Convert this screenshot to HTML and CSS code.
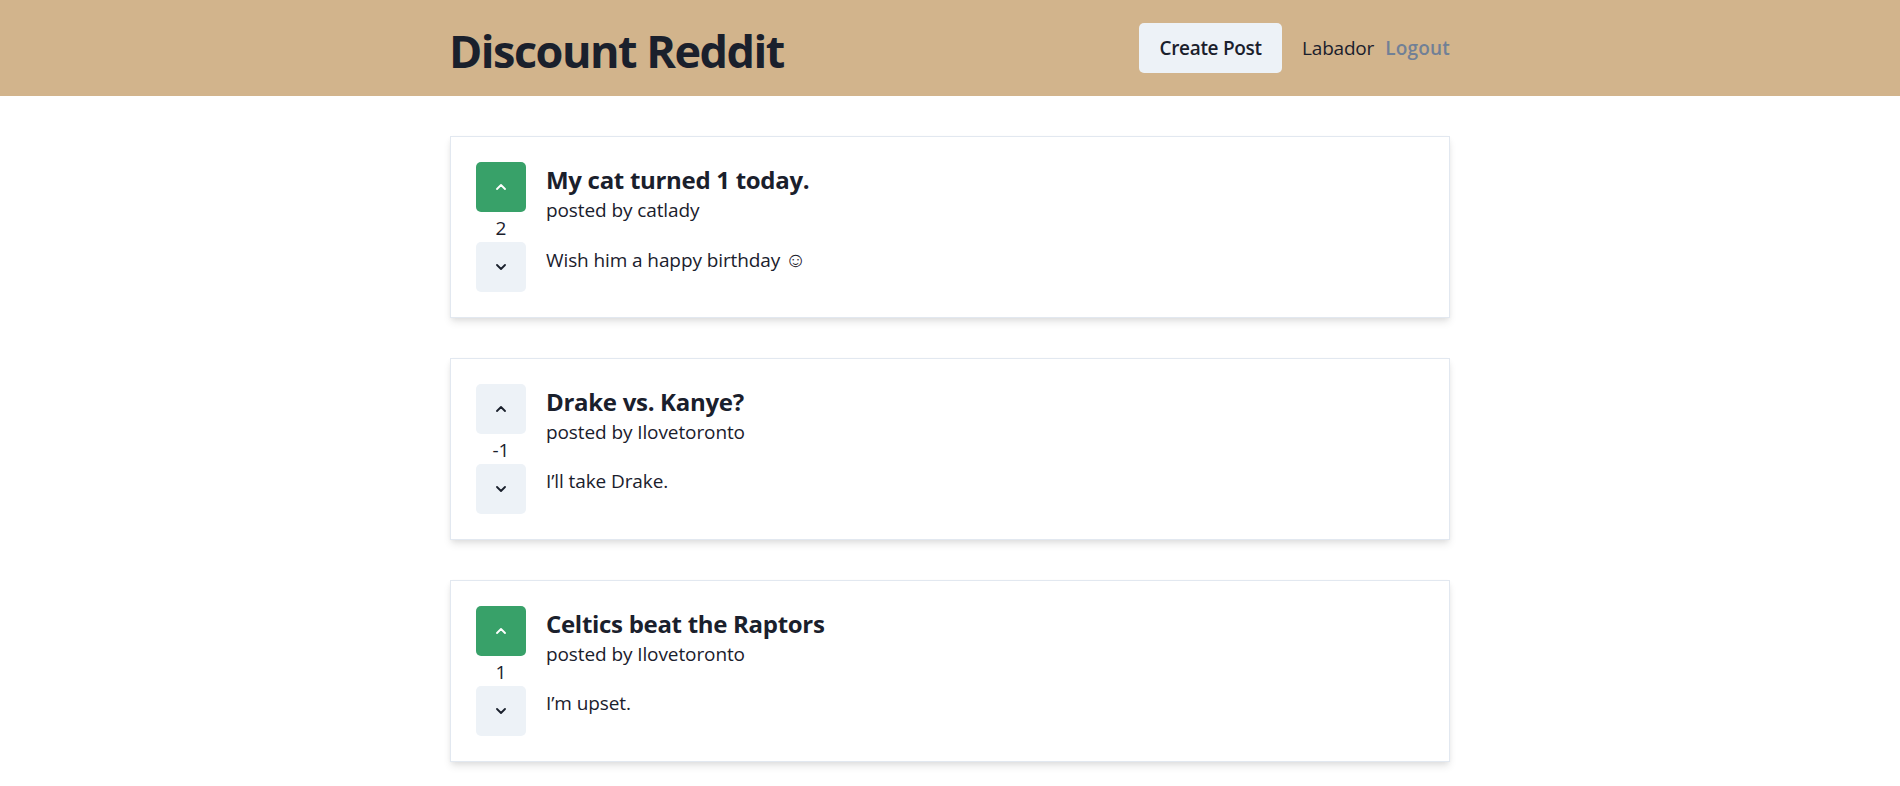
FILE: index.html
```html
<!DOCTYPE html>
<html lang="en">
<head>
<meta charset="utf-8">
<title>Discount Reddit</title>
<link rel="stylesheet" href="styles.css">
</head>
<body>
<header class="topbar">
  <div class="container topbar-inner">
    <h1 class="brand">Discount Reddit</h1>
    <nav class="nav">
      <button class="btn-create">Create Post</button>
      <span class="user">Labador</span>
      <a class="logout" href="#">Logout</a>
    </nav>
  </div>
</header>
<main class="container feed">
  <article class="card">
    <div class="vote">
      <button class="vote-btn up active"><svg viewBox="0 0 10 6" width="10" height="6"><path d="M1 5 L5 1 L9 5" fill="none" stroke="currentColor" stroke-width="1.8" stroke-linecap="round" stroke-linejoin="round"/></svg></button>
      <span class="count">2</span>
      <button class="vote-btn down"><svg viewBox="0 0 10 6" width="10" height="6"><path d="M1 1 L5 5 L9 1" fill="none" stroke="currentColor" stroke-width="1.8" stroke-linecap="round" stroke-linejoin="round"/></svg></button>
    </div>
    <div class="post">
      <h2 class="post-title">My cat turned 1 today.</h2>
      <div class="meta">posted by catlady</div>
      <p class="body">Wish him a happy birthday <span class="emoji">☺</span></p>
    </div>
  </article>
  <article class="card">
    <div class="vote">
      <button class="vote-btn up"><svg viewBox="0 0 10 6" width="10" height="6"><path d="M1 5 L5 1 L9 5" fill="none" stroke="currentColor" stroke-width="1.8" stroke-linecap="round" stroke-linejoin="round"/></svg></button>
      <span class="count">-1</span>
      <button class="vote-btn down"><svg viewBox="0 0 10 6" width="10" height="6"><path d="M1 1 L5 5 L9 1" fill="none" stroke="currentColor" stroke-width="1.8" stroke-linecap="round" stroke-linejoin="round"/></svg></button>
    </div>
    <div class="post">
      <h2 class="post-title">Drake vs. Kanye?</h2>
      <div class="meta">posted by Ilovetoronto</div>
      <p class="body">I’ll take Drake.</p>
    </div>
  </article>
  <article class="card">
    <div class="vote">
      <button class="vote-btn up active"><svg viewBox="0 0 10 6" width="10" height="6"><path d="M1 5 L5 1 L9 5" fill="none" stroke="currentColor" stroke-width="1.8" stroke-linecap="round" stroke-linejoin="round"/></svg></button>
      <span class="count">1</span>
      <button class="vote-btn down"><svg viewBox="0 0 10 6" width="10" height="6"><path d="M1 1 L5 5 L9 1" fill="none" stroke="currentColor" stroke-width="1.8" stroke-linecap="round" stroke-linejoin="round"/></svg></button>
    </div>
    <div class="post">
      <h2 class="post-title">Celtics beat the Raptors</h2>
      <div class="meta">posted by Ilovetoronto</div>
      <p class="body">I’m upset.</p>
    </div>
  </article>
</main>
</body>
</html>
```
FILE: styles.css
```css
* { box-sizing: border-box; }
html {
  overflow-y: scroll;
}
html::-webkit-scrollbar {
  width: 2px;
  background: #e5e5e5;
}
html, body { margin: 0; padding: 0; }
body {
  font-family: "Open Sans", "Noto Sans", sans-serif;
  color: #1a202c;
  background: #ffffff;
  font-size: 20px;
  line-height: 30px;
}
.container {
  max-width: 1000px;
  margin: 0 auto;
}
.topbar {
  background: #d2b48c;
}
.topbar-inner {
  height: 96px;
  display: flex;
  align-items: center;
  justify-content: space-between;
}
.brand {
  margin: 0 0 0 -1px;
  padding: 5px 0 0 0;
  font-size: 45px;
  line-height: 60px;
  font-weight: 700;
  letter-spacing: -1.5px;
  color: #1a202c;
}
.nav {
  display: flex;
  align-items: center;
}
.btn-create {
  font-family: inherit;
  font-size: 19px;
  font-weight: 600;
  color: #1a202c;
  background: #edf2f7;
  border: none;
  border-radius: 5px;
  height: 50px;
  width: 143px;
  padding: 0;
  letter-spacing: -0.3px;
}
.user {
  margin-left: 20px;
  font-size: 19px;
  color: #1a202c;
  letter-spacing: -0.2px;
}
.logout {
  margin-left: 11px;
  font-size: 19px;
  font-weight: 600;
  color: #718096;
  text-decoration: none;
  letter-spacing: 0.2px;
}
.feed {
  padding-top: 40px;
}
.card {
  display: flex;
  align-items: flex-start;
  border: 1px solid #e2e8f0;
  padding: 25px;
  margin-bottom: 40px;
  box-shadow: 0 5px 8px -1px rgba(0, 0, 0, 0.1), 0 2px 5px -1px rgba(0, 0, 0, 0.06);
}
.vote {
  display: flex;
  flex-direction: column;
  align-items: center;
  width: 50px;
}
.vote-btn {
  width: 50px;
  height: 50px;
  border: none;
  border-radius: 5px;
  background: #edf2f7;
  color: #1a202c;
  display: flex;
  align-items: center;
  justify-content: center;
  padding: 0;
}
.vote-btn.active {
  background: #38a169;
  color: #ffffff;
}
.count {
  display: block;
  height: 30px;
  font-size: 19px;
  line-height: 33px;
}
.post {
  margin-left: 20px;
  padding-top: 2px;
}
.post-title {
  margin: 0;
  font-size: 24px;
  line-height: 31px;
  font-weight: 700;
  letter-spacing: -0.3px;
}
.meta {
  font-size: 19px;
  line-height: 30px;
  letter-spacing: -0.1px;
}
.body {
  margin: 19px 0 0;
  font-size: 19px;
  line-height: 30px;
  letter-spacing: -0.1px;
}
.emoji {
  font-size: 21px;
}
```
